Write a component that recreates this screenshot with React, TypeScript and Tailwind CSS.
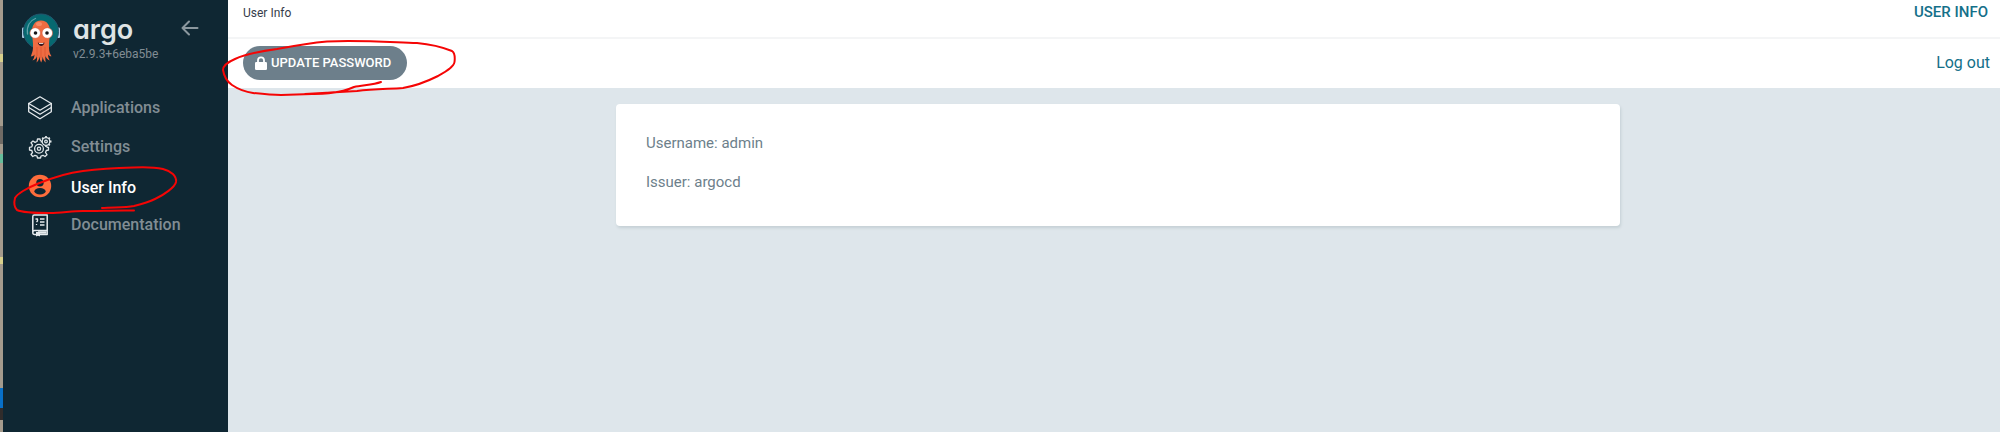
import type { ReactNode } from "react";

function ArgoMascot() {
  return (
    <svg viewBox="0 0 40 50" className="h-[50px] w-10 shrink-0" aria-hidden="true">
      <rect x="1" y="14.5" width="3" height="10.5" rx="1" fill="#a9c9de" />
      <rect x="36" y="14.5" width="3" height="10.5" rx="1" fill="#a9c9de" />
      <circle cx="20" cy="18.5" r="17.5" fill="#066970" stroke="#23556d" strokeWidth="1" />
      <path d="M6.5 21C5.5 13 9 7.500 14.500 5.500" fill="none" stroke="#5fa1aa" strokeWidth="1.300" strokeLinecap="round" />
      <path
        d="M20 7.500C13.500 7.500 10.500 13 11 20C11.300 25 12.300 29 12 35C11.800 39 10.500 41 9.800 43.500C11.500 43.500 13 42.500 13.500 41.500C13.500 44 12.500 46 11.500 47.500C14 47 15.500 45 16 43C16.200 45.500 16 47.500 15.500 49.500C17.500 48 18.300 45.500 18.500 43.500C18.800 46 19.300 48 20.200 49.500C21 48 21.500 46 21.700 43.500C22 46 23 48 24.700 49.500C24.300 47 24.200 45 24.500 43C25.300 45 26.500 47 28.800 47.500C27.500 45.500 27 43.500 27 41.500C28 42.500 29 43.500 30.500 43.300C29 41 28.200 39 28 35C27.700 29 28.700 25 29 20C29.500 13 26.500 7.500 20 7.500Z"
        fill="#ee6c42"
      />
      <ellipse cx="18" cy="11" rx="3" ry="2" fill="#f58b67" />
      <path d="M16 34V43M20 34V45M24 34V43" stroke="#d8502c" strokeWidth="0.700" />
      <circle cx="14.200" cy="20" r="5.300" fill="#fff" stroke="#d8593a" strokeWidth="0.600" />
      <circle cx="26.300" cy="20" r="5.300" fill="#fff" stroke="#d8593a" strokeWidth="0.600" />
      <circle cx="14.500" cy="20" r="1.800" fill="#181519" />
      <circle cx="26" cy="20" r="1.800" fill="#181519" />
      <path d="M16.800 29.500C18.500 30.500 21.500 30.500 23.500 29.500C23 34 17.500 34 16.800 29.500Z" fill="#3a151b" />
      <path d="M18 30.200H22.300V31H18Z" fill="#fff" />
    </svg>
  );
}

function BackArrow() {
  return (
    <svg viewBox="0 0 18 16" className="h-4 w-[18px]" fill="none" stroke="#8b979e" strokeWidth="2" strokeLinecap="round" strokeLinejoin="round">
      <path d="M8 1.500L1.500 8L8 14.500M1.500 8H16.500" />
    </svg>
  );
}

function LayersIcon() {
  return (
    <svg viewBox="0 0 24 24" className="size-6" fill="none" stroke="#e6ebee" strokeWidth="1.300" strokeLinejoin="round" strokeLinecap="round">
      <path d="M12 0.800L23.300 7.500L12 14.200L0.700 7.500Z" />
      <path d="M0.700 7.500V11.500L12 18.200L23.300 11.500V7.500" />
      <path d="M0.700 11.500V15.800L12 22.800L23.300 15.800V11.500" />
    </svg>
  );
}

function GearsIcon() {
  return (
    <svg viewBox="0 0 24 24" className="size-6" fill="none" stroke="#dfe5e8" strokeWidth="1.300" strokeLinejoin="round">
      <path d="M12.500 6.200L12 4H9.500L9 6.500L7 7.400L5 6L3 7.800L4.500 9.800L3.800 11.800L1.500 12.300V15L3.800 15.500L4.500 17.500L3 19.500L4.800 21.500L7 20.300L9 21L9.500 23H12.500L13 21L15 20.300L17 21.500L19 19.700L17.500 17.500L18.300 15.500L20.500 15V12.500L18.500 12" />
      <circle cx="11" cy="13.800" r="4.400" />
      <circle cx="11" cy="13.800" r="1.600" />
      <circle cx="18" cy="6.500" r="3.800" />
      <circle cx="18" cy="6.500" r="1.300" />
      <path d="M18 1V2.700M18 10.300V12M12.700 6.500H14M22 6.500H23.500M14.200 2.700L15.400 3.900M21.800 2.700L20.600 3.900M21.800 10.300L20.600 9.100" strokeWidth="1.800" />
    </svg>
  );
}

function UserIcon() {
  return (
    <svg viewBox="0 0 24 24" className="size-6">
      <circle cx="12" cy="12" r="11.200" fill="#ff6d3c" />
      <circle cx="12" cy="8.800" r="3.700" fill="#0f2733" />
      <ellipse cx="12" cy="17.300" rx="5.600" ry="3.200" fill="#0f2733" />
    </svg>
  );
}

function DocsIcon() {
  return (
    <svg viewBox="0 0 24 24" className="size-6" fill="none" stroke="#e6ebee" strokeWidth="1.500" strokeLinejoin="round">
      <path d="M4.800 19.500V3.500C4.800 2.500 5.300 2 6.300 2H19.200V17.500H6.500C5.500 17.500 4.800 18.300 4.800 19.500C4.800 20.700 5.500 21.500 6.500 21.500H19.200V17.500" />
      <path d="M10 19.500H18.500" strokeWidth="2.500" />
      <path d="M8.500 19V23L10 22L11.500 23V19" strokeWidth="1" fill="#e6ebee" />
      <path d="M12 6H16.500M12 9H16.500M12 12H16.500M7.500 6H9.500V8L8.500 9M8.500 11V12" strokeWidth="1.300" />
    </svg>
  );
}

function LockIcon() {
  return (
    <svg viewBox="0 0 12 14" className="h-[14px] w-3">
      <path d="M3 7V4.200C3 0.300 9 0.300 9 4.200V7" fill="none" stroke="#fff" strokeWidth="1.800" />
      <rect x="0" y="6" width="12" height="8" rx="1.200" fill="#fff" />
    </svg>
  );
}

function NavItem({ icon, label, active = false }: { icon: ReactNode; label: string; active?: boolean }) {
  return (
    <li>
      <a
        href="#"
        aria-current={active ? "page" : undefined}
        className={
          active
            ? "flex h-[39px] items-center gap-[19px] text-base font-medium text-white"
            : "flex h-[39px] items-center gap-[19px] text-base font-medium text-[#818d94]"
        }
      >
        {icon}
        <span className={active ? "pt-1" : ""}>{label}</span>
      </a>
    </li>
  );
}

function PenMarks() {
  return (
    <svg viewBox="0 0 480 220" className="pointer-events-none absolute top-0 left-0 h-[220px] w-[480px]" fill="none" stroke="#f50505" strokeWidth="2" strokeLinecap="round" strokeLinejoin="round" aria-hidden="true">
      <path d="M102 208C113 207 124 208 134 206C142 204 149 202 155 199C164 195 175 187 176 182C177 176 171 171 163 169C154 167 144 167 133 167.500C116 168 99 169 83 171C66 173 49 179 37 184C27 188 17 194 15 198C14 202 14 207 17 210C23 213 38 213 50 213C61 213 72 211 83 211C100 211 117 210 134 210.500" />
      <path d="M381 82C373 85 363 85 354 87C347 90 341 92 334 92.500C325 94 315 94 305 94C323 93 340 92 357 91C373 89 389 89 403 88C415 86 428 81 438 76C445 72 454 67 454.500 62C455 58 455 53 452 51C442 47 428 44 417 43C387 42 357 40 327 41.500C310 43 293 46 277 49C262 51 246 54 235 59C228 62 223 66 223 70C224 76 226 81 232 85C238 89 245 92 253 93C262 94 271 95 281 95C300 95 318 94 337 92" />
    </svg>
  );
}

export default function App() {
  return (
    <div className="relative flex min-h-screen bg-[#dee6eb] font-[Roboto,sans-serif]">
      <div className="flex w-[3px] shrink-0 flex-col bg-[#a49b8d]" aria-hidden="true">
        <div className="mt-[54px] h-2 bg-[#d8d08c]" />
        <div className="mt-16 h-[18px] bg-[#706b65]" />
        <div className="mt-[10px] h-[9px] bg-[#66bd9b]" />
        <div className="mt-[94px] h-[7px] bg-[#d8d08c]" />
        <div className="mt-[124px] h-5 bg-[#0870c8]" />
        <div className="h-3 bg-[#302c2b]" />
      </div>

      <aside className="w-[225px] shrink-0 bg-[#0f2733]">
        <div className="flex pt-[13px] pl-[18px]">
          <ArgoMascot />
          <div className="ml-3 w-[108px]">
            <div className="h-[34px] text-[27px] leading-[34px] font-semibold text-[#dfe4e5] [font-family:Inter,sans-serif] [font-feature-settings:'cv11']">argo</div>
            <div className="text-xs leading-[14px] text-[#818d94]">v2.9.3+6eba5be</div>
          </div>
          <button type="button" aria-label="Collapse sidebar" className="mt-[7px] h-4">
            <BackArrow />
          </button>
        </div>
        <nav className="mt-[25px] pl-[25px]">
          <ul>
            <NavItem icon={<LayersIcon />} label="Applications" />
            <NavItem icon={<GearsIcon />} label="Settings" />
            <NavItem icon={<UserIcon />} label="User Info" active />
            <NavItem icon={<DocsIcon />} label="Documentation" />
          </ul>
        </nav>
      </aside>

      <div className="min-w-0 flex-1">
        <header className="bg-white">
          <div className="flex h-[39px] justify-between border-b-2 border-[#f4f5f6] pt-1 pr-3 pl-[15px]">
            <span className="text-xs leading-[18px] text-[#363c4a]">User Info</span>
            <h1 className="text-[15px] leading-4 font-medium text-[#147089]">USER INFO</h1>
          </div>
          <div className="flex h-[49px] items-center justify-between pr-[10px] pb-[2px] pl-[15px]">
            <button type="button" className="flex h-[34px] items-center gap-1 rounded-full bg-[#6d7f8b] pr-4 pl-3 text-[13px] font-medium text-white">
              <LockIcon />
              UPDATE PASSWORD
            </button>
            <a href="#" className="text-base text-[#147089]">Log out</a>
          </div>
        </header>
        <main className="pt-4 pr-4 pl-6">
          <section className="mx-auto max-w-[1004px] rounded bg-white px-[30px] pt-5 pb-6 text-[15px] text-[#6d7f8b] shadow-[1px_2px_3px_#c5d0d5]">
            <p className="py-[10px] leading-[19px]">Username: admin</p>
            <p className="py-[10px] leading-[19px]">Issuer: argocd</p>
          </section>
        </main>
      </div>

      <PenMarks />
    </div>
  );
}
